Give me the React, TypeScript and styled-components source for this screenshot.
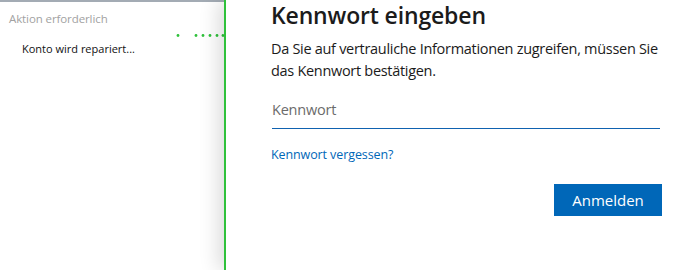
import React from "react";
import styled, { createGlobalStyle } from "styled-components";

const GlobalStyle = createGlobalStyle`
  html, body { margin: 0; padding: 0; background: #ffffff; }
  body { font-family: "Open Sans", "Noto Sans", "Liberation Sans", sans-serif; }
  * { box-sizing: border-box; }
`;

const Page = styled.div`
  display: flex;
  width: 695px;
  height: 270px;
  overflow: hidden;
  background: #ffffff;
`;

const SidePanel = styled.aside`
  width: 224px;
  flex: none;
  border-top: 2px solid #a3abb4;
  padding: 9px 0 0 9px;
  background: #ffffff;
  overflow: hidden;
`;

const Caption = styled.div`
  font-size: 11.5px;
  line-height: 16px;
  color: #a2a2a2;
  letter-spacing: -0.1px;
`;

const StatusRow = styled.div`
  display: flex;
  align-items: flex-start;
  justify-content: space-between;
  padding-left: 13px;
  margin-top: 2px;
`;

const StatusText = styled.div`
  font-size: 11px;
  line-height: 16px;
  color: #111111;
  padding-top: 12px;
`;

const Dots = styled.svg`
  flex: none;
  margin-top: 4px;
  display: block;
`;

const Dialog = styled.section`
  position: relative;
  z-index: 1;
  flex: 1;
  background: #ffffff;
  border-left: 2px solid #2fc13b;
  box-shadow: -6px 0 18px rgba(0, 0, 0, 0.14);
  padding: 0 33px 0 45px;
  display: flex;
  flex-direction: column;
`;

const Title = styled.h1`
  margin: 0;
  font-size: 23px;
  font-weight: 600;
  line-height: 31px;
  color: #1b1b1b;
  letter-spacing: -0.15px;
`;

const Text = styled.p`
  margin: 7px 0 0;
  font-size: 14.5px;
  line-height: 22px;
  color: #1b1b1b;
  letter-spacing: -0.3px;
`;

const Field = styled.input`
  margin: 18px 2px 0 1px;
  border: none;
  border-bottom: 1px solid #0f62b0;
  outline: none;
  padding: 0 0 8px 0;
  font-family: inherit;
  font-size: 14.5px;
  line-height: 20px;
  color: #1b1b1b;
  background: transparent;
  letter-spacing: -0.2px;
  &::placeholder { color: #6b6b6b; }
`;

const ForgotLink = styled.a`
  margin-top: 18px;
  font-size: 12.5px;
  line-height: 16px;
  color: #0067b8;
  text-decoration: none;
  align-self: flex-start;
  letter-spacing: -0.1px;
`;

const Actions = styled.div`
  display: flex;
  justify-content: flex-end;
  margin-top: 21px;
`;

const PrimaryButton = styled.button`
  width: 108px;
  height: 32px;
  border: none;
  background: #0067b8;
  color: #ffffff;
  font-family: inherit;
  font-size: 15px;
  padding: 0;
`;

export default function App() {
  const dotXs = [12, 30, 37, 44, 51, 57];
  return (
    <>
      <GlobalStyle />
      <Page>
        <SidePanel>
          <Caption>Aktion erforderlich</Caption>
          <StatusRow>
            <StatusText>Konto wird repariert...</StatusText>
            <Dots width="58" height="6" viewBox="0 0 58 6">
              {dotXs.map((x) => (
                <circle key={x} cx={x} cy={2.5} r={1.4} fill="#2fc13b" />
              ))}
            </Dots>
          </StatusRow>
        </SidePanel>
        <Dialog>
          <Title>Kennwort eingeben</Title>
          <Text>
            Da Sie auf vertrauliche Informationen zugreifen, müssen Sie das Kennwort bestätigen.
          </Text>
          <Field type="password" placeholder="Kennwort" />
          <ForgotLink href="#">Kennwort vergessen?</ForgotLink>
          <Actions>
            <PrimaryButton>Anmelden</PrimaryButton>
          </Actions>
        </Dialog>
      </Page>
    </>
  );
}
